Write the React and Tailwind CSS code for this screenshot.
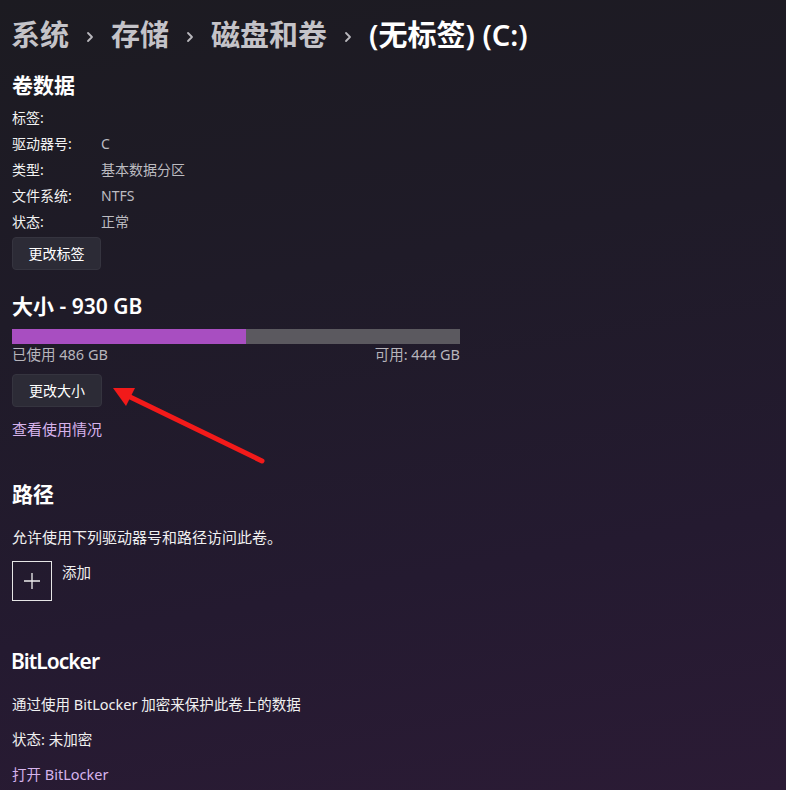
import React from 'react';

const font = { fontFamily: '"Noto Sans", "Noto Sans CJK SC", sans-serif' };

const rows = [
  ['标签:', ''],
  ['驱动器号:', 'C'],
  ['类型:', '基本数据分区'],
  ['文件系统:', 'NTFS'],
  ['状态:', '正常'],
];

const Chevron = () => (
  <svg width="10" height="14" viewBox="0 0 10 14" className="mx-[16px] mt-[3px]">
    <path d="M3 3 L7 7 L3 11" fill="none" stroke="#b9b8bd" strokeWidth="1.8" strokeLinecap="round" strokeLinejoin="round" />
  </svg>
);

const Button = ({ children, w }) => (
  <button className={`${w} h-[33px] rounded-[4px] bg-[#2c2b36] border border-[#35343f] text-[14px] text-white leading-none`}>
    {children}
  </button>
);

export default function App() {
  return (
    <div
      className="relative w-[786px] h-[790px] overflow-hidden bg-[linear-gradient(170deg,#1c1b21_0%,#1f1b28_35%,#241a30_70%,#2b1b35_100%)] text-white"
      style={font}
    >
      <div className="pl-[12px] pt-[17px]">
        <div className="flex items-center h-[36px] text-[29px] font-semibold leading-[36px]">
          <span className="text-[#c4c3c8] -ml-[1px]">系统</span>
          <Chevron />
          <span className="text-[#c4c3c8]">存储</span>
          <Chevron />
          <span className="text-[#c4c3c8]">磁盘和卷</span>
          <Chevron />
          <span className="text-white">(无标签) (C:)</span>
        </div>

        <h2 className="mt-[18px] text-[21px] font-semibold leading-[28px]">卷数据</h2>
        <div className="mt-[5px] flex flex-col">
          {rows.map(([k, v]) => (
            <div key={k} className="flex h-[26px] items-center text-[14px]">
              <span className="w-[89px] text-[#f2f2f2]">{k}</span>
              <span className="text-[#bdbcc1]">{v}</span>
            </div>
          ))}
        </div>
        <div className="mt-[3px]">
          <Button w="w-[89px]">更改标签</Button>
        </div>

        <h2 className="mt-[22px] text-[21px] font-semibold leading-[28px]">大小 - 930 GB</h2>
        <div className="mt-[9px] flex w-[448px] h-[15px] bg-[#5b595f]">
          <div className="w-[234px] h-full bg-[#a84ec1]" />
        </div>
        <div className="flex w-[448px] justify-between text-[14.5px] leading-[20px] text-[#b7b5bc]">
          <span>已使用 486 GB</span>
          <span>可用: 444 GB</span>
        </div>
        <div className="mt-[10px]">
          <Button w="w-[90px]">更改大小</Button>
        </div>
        <div className="mt-[12px] text-[15px] leading-[20px] text-[#d6b3ec]">查看使用情况</div>

        <h2 className="mt-[41px] text-[21px] font-semibold leading-[28px]">路径</h2>
        <p className="mt-[19px] text-[15px] leading-[20px] text-[#f0f0f0]">允许使用下列驱动器号和路径访问此卷。</p>
        <div className="mt-[14px] flex items-start gap-[10px]">
          <div className="w-[40px] h-[40px] border border-[#e6e6e6] flex items-center justify-center">
            <svg width="18" height="18" viewBox="0 0 18 18">
              <path d="M9 1 V17 M1 9 H17" stroke="#eeeeee" strokeWidth="1.3" />
            </svg>
          </div>
          <span className="mt-[1px] text-[14.5px] leading-[20px] text-[#f0f0f0]">添加</span>
        </div>

        <h2 className="mt-[46px] text-[21px] font-semibold leading-[28px] -ml-[1px] tracking-[-1px]">BitLocker</h2>
        <p className="mt-[19px] text-[14.5px] leading-[20px] text-[#f0f0f0]">通过使用 BitLocker 加密来保护此卷上的数据</p>
        <p className="mt-[15px] text-[14.5px] leading-[20px] text-[#f0f0f0]">状态: 未加密</p>
        <div className="mt-[15px] text-[14.5px] leading-[20px] text-[#d6b3ec]">打开 BitLocker</div>
      </div>

      <svg className="absolute left-0 top-0 pointer-events-none" width="786" height="790">
        <line x1="262" y1="461" x2="126" y2="395" stroke="#f21a1a" strokeWidth="5" strokeLinecap="round" />
        <polygon points="113,388 135,388 126,406" fill="#f21a1a" />
      </svg>
    </div>
  );
}
